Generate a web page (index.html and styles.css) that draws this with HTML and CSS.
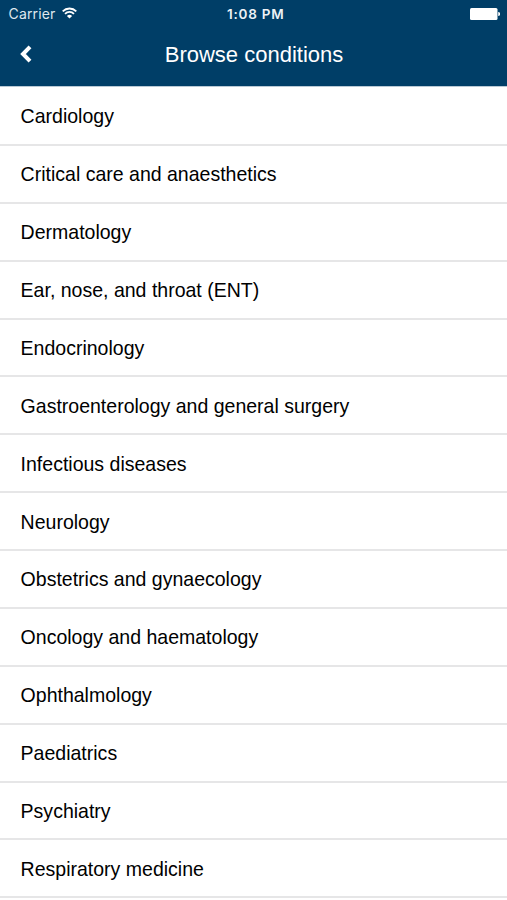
FILE: index.html
```html
<!DOCTYPE html>
<html lang="en">
<head>
<meta charset="utf-8">
<title>Browse conditions</title>
<link rel="stylesheet" href="styles.css">
</head>

<body>
  <div class="header">
    <div class="status">
      <div class="carrier">
        <span>Carrier</span>
        <svg class="wifi" width="15" height="12" viewBox="0 0 15 12">
          <path d="M.7 4.3a9.6 9.6 0 0 1 13.6 0M3 6.8a6.4 6.4 0 0 1 9 0" fill="none" stroke="#fff" stroke-width="1.8"/>
          <path d="M7.5 11.6L4.9 9a3.7 3.7 0 0 1 5.2 0z" fill="#fff"/>
        </svg>
      </div>
      <div class="time">1:08 PM</div>
      <div class="power">
        <svg width="30" height="12" viewBox="0 0 30 12">
          <rect x="0" y="0" width="27.5" height="12" rx="1.5" fill="#fff"/>
          <path d="M28.2 4a2 2 0 0 1 0 4z" fill="#fff"/>
        </svg>
      </div>
    </div>
    <div class="nav">
      <a class="back" href="javascript:;" aria-label="Back">
        <svg width="12" height="18" viewBox="0 0 12 18"><path d="M10 1.8L3 9l7 7.2" fill="none" stroke="#fff" stroke-width="4"/></svg>
      </a>
      <h1>Browse conditions</h1>
    </div>
  </div>
  <ul class="list">
    <li><span>Cardiology</span></li>
    <li><span>Critical care and anaesthetics</span></li>
    <li><span>Dermatology</span></li>
    <li><span>Ear, nose, and throat (ENT)</span></li>
    <li><span>Endocrinology</span></li>
    <li><span>Gastroenterology and general surgery</span></li>
    <li><span>Infectious diseases</span></li>
    <li><span>Neurology</span></li>
    <li><span>Obstetrics and gynaecology</span></li>
    <li><span>Oncology and haematology</span></li>
    <li><span>Ophthalmology</span></li>
    <li><span>Paediatrics</span></li>
    <li><span>Psychiatry</span></li>
    <li><span>Respiratory medicine</span></li>
  </ul>
</body>
</html>
```

FILE: styles.css
```css
* {margin:0;padding:0;box-sizing:border-box}
ul,li {list-style:none}
body {background:#fff;color:#000;font-family:"Liberation Sans",Arial,sans-serif;overflow:hidden}

.header {height:87px;background:#003e67;color:#fff;border-bottom:1px solid #b9c9d5}
.status {display:grid;grid-template-columns:1fr auto 1fr;align-items:center;height:27px;padding:0 7px 0 8.5px;font-family:Inter,sans-serif;font-size:14px}
.carrier {display:flex;align-items:center;gap:6.5px;color:#dfe8ee;letter-spacing:.15px}
.wifi {margin-top:-2px}
.time {font-weight:600;font-size:13.5px;letter-spacing:.75px;color:#edf2f6;padding-left:3px}
.power {display:flex;justify-content:flex-end}
.nav {display:grid;grid-template-columns:40px 1fr 40px;align-items:center;height:56px}
.back {display:flex;padding-left:20px;margin-top:-2px}
.nav h1 {font-size:22px;font-weight:normal;text-align:center;line-height:26px;padding-left:1px}

.list {padding-top:1px}
.list li {display:flex;align-items:center;height:57.88px;padding:2px 20px 0 20.6px;border-bottom:2px solid #e6e6e7;font-size:19.52px}
```
